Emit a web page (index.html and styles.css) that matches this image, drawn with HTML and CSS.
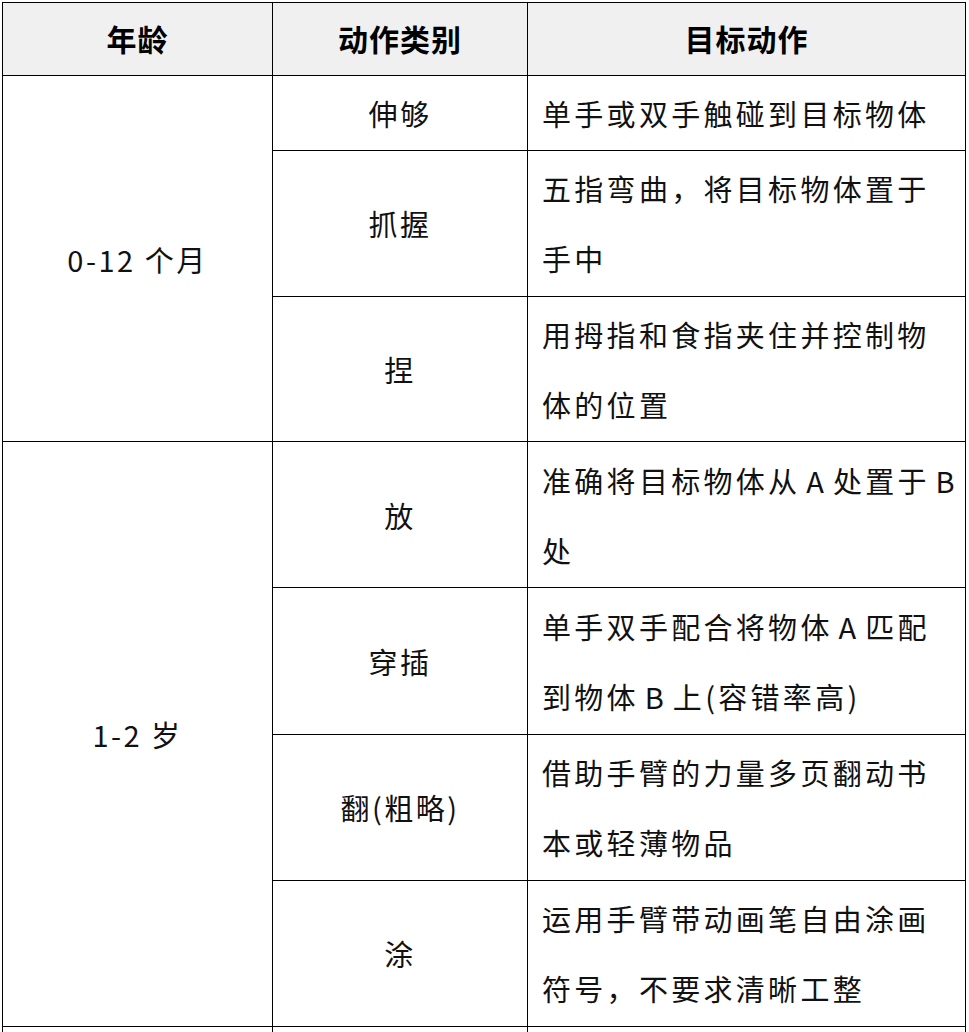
FILE: index.html
```html
<!DOCTYPE html>
<html lang="zh-CN">
<head>
<meta charset="utf-8">
<title>精细动作发展表</title>
<link rel="stylesheet" href="styles.css">
</head>
<body>
<table class="grid">
  <colgroup>
    <col class="c-age">
    <col class="c-type">
    <col class="c-goal">
  </colgroup>
  <thead>
    <tr class="head">
      <th>年龄</th>
      <th>动作类别</th>
      <th>目标动作</th>
    </tr>
  </thead>
  <tbody>
    <tr class="r1">
      <td class="age" rowspan="3">0-12 个月</td>
      <td class="type">伸够</td>
      <td class="goal">单手或双手触碰到目标物体</td>
    </tr>
    <tr class="r2">
      <td class="type">抓握</td>
      <td class="goal">五指弯曲，将目标物体置于<br>手中</td>
    </tr>
    <tr class="r2">
      <td class="type">捏</td>
      <td class="goal">用拇指和食指夹住并控制物<br>体的位置</td>
    </tr>
    <tr class="r3">
      <td class="age" rowspan="4">1-2 岁</td>
      <td class="type">放</td>
      <td class="goal">准确将目标物体从 A 处置于 B<br>处</td>
    </tr>
    <tr class="r3">
      <td class="type">穿插</td>
      <td class="goal">单手双手配合将物体 A 匹配<br>到物体 B 上(容错率高)</td>
    </tr>
    <tr class="r3">
      <td class="type">翻(粗略)</td>
      <td class="goal">借助手臂的力量多页翻动书<br>本或轻薄物品</td>
    </tr>
    <tr class="r3">
      <td class="type">涂</td>
      <td class="goal">运用手臂带动画笔自由涂画<br>符号，不要求清晰工整</td>
    </tr>
    <tr class="r3">
      <td class="age">&nbsp;</td>
      <td class="type">&nbsp;</td>
      <td class="goal">&nbsp;</td>
    </tr>
  </tbody>
</table>
</body>
</html>
```
FILE: styles.css
```css
html, body {
  margin: 0;
  padding: 0;
  background: #ffffff;
}

body {
  padding: 2px 0 0 2px;
  font-family: "Noto Sans CJK SC", "Noto Sans", sans-serif;
  color: #111111;
  overflow: hidden;
}

.grid {
  border-collapse: collapse;
  table-layout: fixed;
  width: 963px;
}

.c-age { width: 270px; }
.c-type { width: 255px; }
.c-goal { width: 438px; }

.grid th,
.grid td {
  border: 1px solid #000000;
  padding: 2px 2px 2px 14px;
  font-size: 29px;
  line-height: 70px;
  letter-spacing: 3.3px;
  vertical-align: middle;
}

.grid th {
  background: #f0f0f0;
  font-weight: 700;
  text-align: center;
  padding: 0 0 2px 0;
  letter-spacing: 1px;
  font-size: 30px;
  color: #000000;
}

.grid td.age,
.grid td.type {
  text-align: center;
  padding-left: 0;
  padding-right: 0;
  letter-spacing: 2.5px;
}

.grid td.goal {
  text-align: left;
  white-space: nowrap;
  word-spacing: -4px;
}

.r1 td {
  padding-top: 2px;
  padding-bottom: 2px;
}

.r2 td {
  padding-top: 2px;
  padding-bottom: 2.5px;
}

.r3 td {
  padding-top: 2.5px;
  padding-bottom: 2.75px;
}
```
